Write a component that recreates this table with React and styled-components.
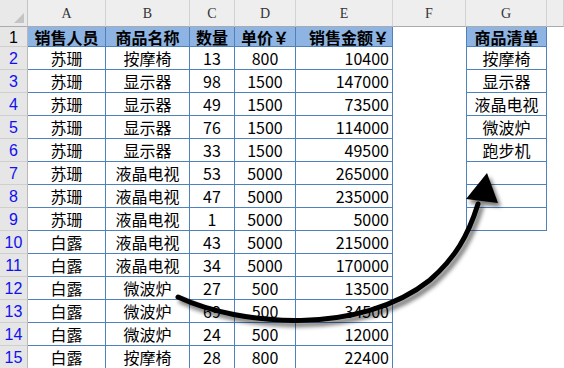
import React from "react";
import styled, { createGlobalStyle } from "styled-components";

const Global = createGlobalStyle`
  html, body { margin: 0; padding: 0; background: #ffffff; }
  body { width: 564px; height: 368px; overflow: hidden; }
`;

const BLUE_LINE = "#4f81bd";
const CJK = `"Noto Sans CJK SC", "Noto Sans", sans-serif`;

const Page = styled.div`
  position: relative;
  width: 564px;
  height: 368px;
  overflow: hidden;
  background: #ffffff;
`;

const Sheet = styled.div`
  display: grid;
  grid-template-columns: 28px 78px 84px 45px 61px 97px 73px 81px 17px;
  grid-template-rows: 27px 20px repeat(14, 23px);
`;

const Corner = styled.div`
  position: relative;
  background: #e9e9e9;
  border-right: 1px solid #c4c4c4;
  border-bottom: 1px solid #ababab;
  box-sizing: border-box;
  &::after {
    content: "";
    position: absolute;
    right: 3px;
    bottom: 3px;
    width: 0;
    height: 0;
    border-left: 10px solid transparent;
    border-bottom: 10px solid #c4c4c4;
  }
`;

const ColHead = styled.div`
  display: flex;
  align-items: flex-end;
  justify-content: center;
  padding-bottom: 5px;
  box-sizing: border-box;
  background: #eeeeee;
  border-right: 1px solid #d2d2d2;
  border-bottom: 1px solid #ababab;
  font-family: "Liberation Serif", serif;
  font-size: 14px;
  line-height: 1;
  color: #333333;
`;

const RowHead = styled.div`
  display: flex;
  align-items: center;
  justify-content: center;
  box-sizing: border-box;
  background: #e6e6e6;
  border-right: 1px solid #b8b8b8;
  border-bottom: 1px solid #cfcfcf;
  font-family: "Liberation Sans", sans-serif;
  font-size: 16px;
  line-height: 1;
  padding-top: 2px;
  color: ${(p) => (p.$blue ? "#1010f0" : "#000000")};
`;

const Cell = styled.div`
  display: flex;
  align-items: center;
  justify-content: ${(p) => (p.$align === "right" ? "flex-end" : "center")};
  padding-right: ${(p) => (p.$align === "right" ? "3px" : "0")};
  box-sizing: border-box;
  white-space: nowrap;
  overflow: visible;
  font-family: ${CJK};
  font-size: 16px;
  line-height: 1;
  color: #000000;
  font-weight: ${(p) => (p.$head ? 700 : 400)};
  background: ${(p) => (p.$head ? "#8db4e2" : "#ffffff")};
  border-right: ${(p) => (p.$boxed ? `1px solid ${BLUE_LINE}` : "none")};
  border-bottom: ${(p) => (p.$boxed ? `1px solid ${BLUE_LINE}` : "none")};
  border-left: ${(p) => (p.$left ? `1px solid ${BLUE_LINE}` : "none")};
`;

const ArrowLayer = styled.svg`
  position: absolute;
  left: 0;
  top: 0;
  width: 564px;
  height: 368px;
  pointer-events: none;
`;

const cols = ["A", "B", "C", "D", "E", "F", "G", ""];

const header = ["销售人员", "商品名称", "数量", "单价￥", "销售金额￥"];

const rows = [
  ["苏珊", "按摩椅", "13", "800", "10400"],
  ["苏珊", "显示器", "98", "1500", "147000"],
  ["苏珊", "显示器", "49", "1500", "73500"],
  ["苏珊", "显示器", "76", "1500", "114000"],
  ["苏珊", "显示器", "33", "1500", "49500"],
  ["苏珊", "液晶电视", "53", "5000", "265000"],
  ["苏珊", "液晶电视", "47", "5000", "235000"],
  ["苏珊", "液晶电视", "1", "5000", "5000"],
  ["白露", "液晶电视", "43", "5000", "215000"],
  ["白露", "液晶电视", "34", "5000", "170000"],
  ["白露", "微波炉", "27", "500", "13500"],
  ["白露", "微波炉", "69", "500", "34500"],
  ["白露", "微波炉", "24", "500", "12000"],
  ["白露", "按摩椅", "28", "800", "22400"],
];

const list = ["商品清单", "按摩椅", "显示器", "液晶电视", "微波炉", "跑步机", "", "", ""];

const aligns = ["center", "center", "center", "center", "right"];

export default function App() {
  const allRows = [header, ...rows];
  return (
    <Page>
      <Global />
      <Sheet>
        <Corner />
        {cols.map((c, k) => (
          <ColHead key={k}>{c}</ColHead>
        ))}
        {allRows.map((r, i) => {
          const isHead = i === 0;
          const gText = list[i];
          const gBoxed = i < list.length;
          return (
            <React.Fragment key={i}>
              <RowHead $blue={i > 0}>{i + 1}</RowHead>
              {r.map((v, j) => (
                <Cell key={j} $boxed $head={isHead} $align={aligns[j]}>
                  {v}
                </Cell>
              ))}
              <Cell />
              <Cell $boxed={gBoxed} $left={gBoxed} $head={isHead && gBoxed}>
                {gBoxed ? gText : ""}
              </Cell>
              <Cell />
            </React.Fragment>
          );
        })}
      </Sheet>
      <ArrowLayer viewBox="0 0 564 368">
        <defs>
          <filter id="shadow" x="-20%" y="-20%" width="140%" height="140%">
            <feGaussianBlur in="SourceAlpha" stdDeviation="2.2" />
            <feOffset dx="3" dy="4" result="off" />
            <feComponentTransfer>
              <feFuncA type="linear" slope="0.55" />
            </feComponentTransfer>
            <feMerge>
              <feMergeNode />
              <feMergeNode in="SourceGraphic" />
            </feMerge>
          </filter>
        </defs>
        <g filter="url(#shadow)">
          <path
            d="M178,297 C240,326 360,336 430,280 C455,258 468,236 478,204"
            fill="none"
            stroke="#000000"
            strokeWidth="5"
            strokeLinecap="round"
          />
          <polygon points="487,173 466,199 498,203" fill="#000000" />
        </g>
      </ArrowLayer>
    </Page>
  );
}
